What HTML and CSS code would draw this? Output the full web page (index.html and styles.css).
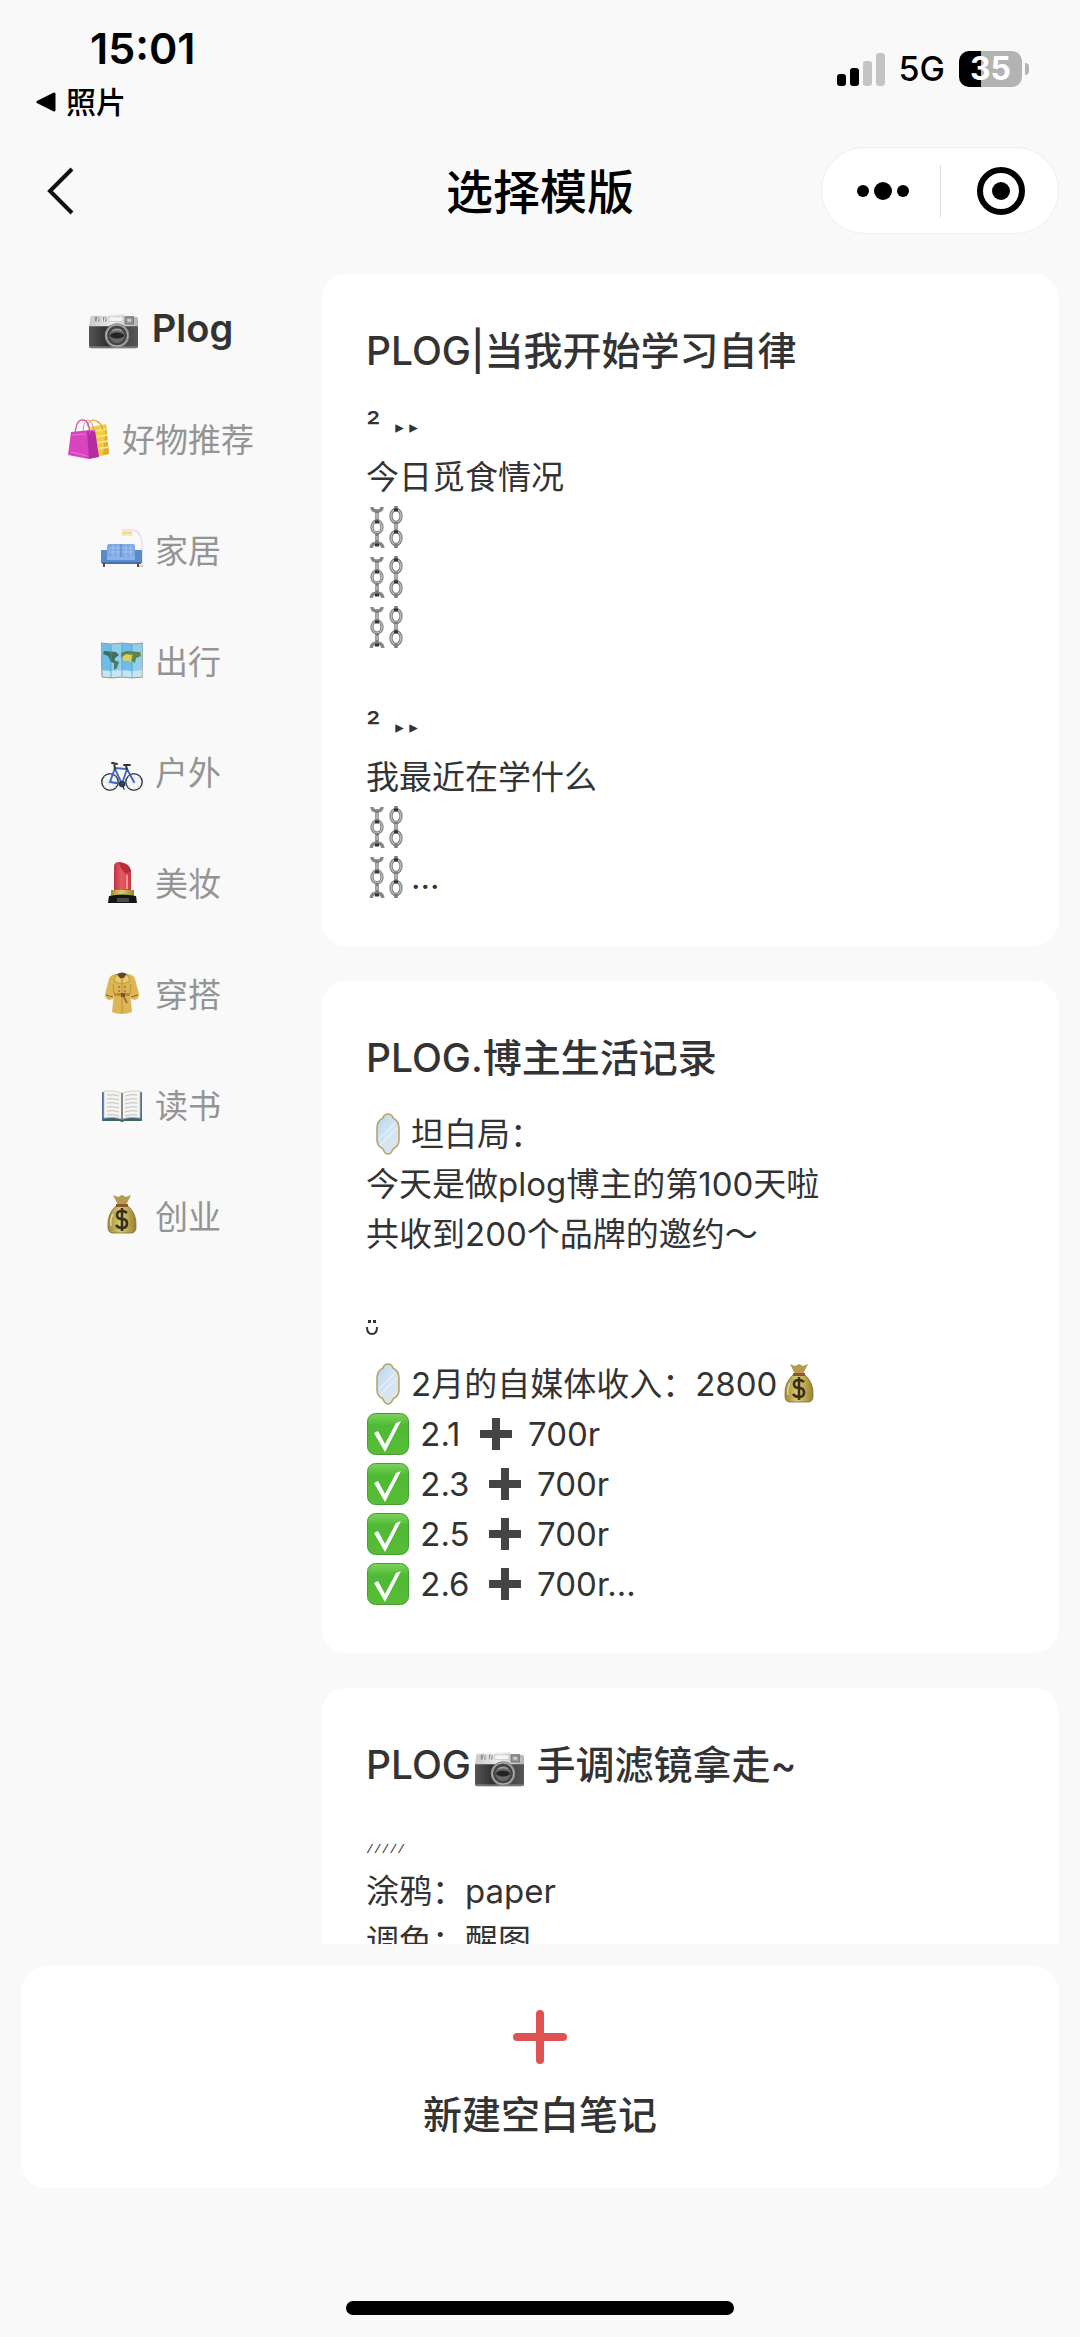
FILE: index.html
```html
<!DOCTYPE html>
<html lang="zh-CN">
<head>
  <meta charset="UTF-8">
  <meta name="viewport" content="width=device-width, initial-scale=1">
  <title>选择模版</title>
  <link rel="stylesheet" href="styles.css">
</head>
<body>

  <!-- emoji sprite -->
  <svg class="sprite" aria-hidden="true">
    <defs>
      <linearGradient id="silver" x1="0" y1="0" x2="1" y2="0">
        <stop offset="0" stop-color="#c9c9c7"/><stop offset=".5" stop-color="#efefed"/><stop offset="1" stop-color="#b4b4b2"/>
      </linearGradient>
      <linearGradient id="leather" x1="0" y1="0" x2="1" y2="0">
        <stop offset="0" stop-color="#555"/><stop offset=".4" stop-color="#2c2c2c"/><stop offset="1" stop-color="#585858"/>
      </linearGradient>
      <linearGradient id="green" x1="0" y1="0" x2="0" y2="1">
        <stop offset="0" stop-color="#7bd45c"/><stop offset=".3" stop-color="#4fb935"/><stop offset="1" stop-color="#58bd35"/>
      </linearGradient>
      <linearGradient id="gold" x1="0" y1="0" x2="1" y2="0">
        <stop offset="0" stop-color="#a08a35"/><stop offset=".45" stop-color="#dccb72"/><stop offset="1" stop-color="#96802f"/>
      </linearGradient>
      <linearGradient id="lip" x1="0" y1="0" x2="1" y2="0">
        <stop offset="0" stop-color="#c23345"/><stop offset=".45" stop-color="#e65a63"/><stop offset="1" stop-color="#c93646"/>
      </linearGradient>
      <linearGradient id="glass" x1="0" y1="0" x2="1" y2="1">
        <stop offset="0" stop-color="#b9d6ee"/><stop offset=".5" stop-color="#d3e4f4"/><stop offset="1" stop-color="#dfe5e8"/>
      </linearGradient>
    </defs>

    <symbol id="camera" viewBox="0 0 42 42">
      <path d="M1 12q0-2 2-2h14l1-1h12l1 2h9q2 0 2 2v7H0z" fill="url(#silver)"/>
      <path d="M5 11h4v4H5zM12 11h3v4h-3z" fill="#8d8d8b"/>
      <path d="M8 11l-1 4M14 11l-1 4" stroke="#eee"/>
      <path d="M17 11h12v4H17z" fill="#f4f4f2" stroke="#bbb" stroke-width=".5"/>
      <path d="M31 11h7v6h-7z" fill="#9a9a98" stroke="#777"/>
      <path d="M33 13h3v2h-3z" fill="#d8d8d6"/>
      <path d="M0 19h42v17q0 2-2 2H2q-2 0-2-2z" fill="url(#leather)"/>
      <path d="M0 37h42" stroke="#8a8a8a" stroke-width="1"/>
      <circle cx="24" cy="27" r="10.5" fill="#8c8c8c"/>
      <circle cx="24" cy="27" r="9" fill="#444" stroke="#c2c2c2" stroke-width=".8"/>
      <circle cx="24" cy="27" r="6.5" fill="#6a6a6a"/>
      <ellipse cx="24" cy="27" rx="6" ry="2.5" fill="#242424"/>
      <path d="M20 23q4-2 8 0" stroke="#a5a5a5" fill="none"/>
    </symbol>

    <symbol id="bags" viewBox="0 0 42 42">
      <path d="M22 10l16-3 3 30-12 3z" fill="#f2cb45"/>
      <path d="M38 7l3 30-6 1z" fill="#d9ab31"/>
      <path d="M27 14l11-2M28 20l11-2M28 26l12-2M29 32l11-2" stroke="#f9e07d" stroke-width="2"/>
      <path d="M19 9q4-8 9-5 5 1 7 9" fill="none" stroke="#e0a93c" stroke-width="1.3"/>
      <path d="M3 15l19-2 8 25-9 4L0 38z" fill="#d944c0"/>
      <path d="M19 14l8-1 4 27-10 2z" fill="#b42c9f"/>
      <path d="M7 18Q8 2 15 3q6 0 7 14" fill="none" stroke="#c75a9c" stroke-width="1.3"/>
      <path d="M15 14Q16 2 20 3q5 1 6 12" fill="none" stroke="#d690a6" stroke-width="1"/>
      <path d="M4 18l14-1M3 35l16 4" stroke="#ee72d6" stroke-width="1"/>
    </symbol>

    <symbol id="sofa" viewBox="0 0 42 42">
      <path d="M29 2q11-1 12 14v21" fill="none" stroke="#dfe1ee" stroke-width="1.5"/>
      <path d="M21 1h9l2 7H21z" fill="#fbe7bd"/>
      <path d="M21 5h10" stroke="#f2cf8c" stroke-width="1.5"/>
      <path d="M36 38h6" stroke="#d8cfcf" stroke-width="2"/>
      <rect x="6" y="16" width="28" height="15" rx="2" fill="#7ea9e2"/>
      <path d="M8 20h24M8 24h24M12 17v12M17 17v12M25 17v12M30 17v12" stroke="#a9c7f0" stroke-width=".8"/>
      <path d="M20 16v13" stroke="#567fbd"/>
      <path d="M0 22h6v7h28v-7h7v13H0z" fill="#5a8acb"/>
      <path d="M6 29h28v3H6z" fill="#8db2e6"/>
      <path d="M1 35h39" stroke="#4772ad" stroke-width="2"/>
      <path d="M3 35v4M37 35v4" stroke="#62483a" stroke-width="2"/>
    </symbol>

    <symbol id="map" viewBox="0 0 42 42">
      <path d="M0 4l10 1 11-1 10 1 11-1v34l-11 1-10-1-10 1-10-1z" fill="#6fbde6"/>
      <path d="M10 5l11-1v34l-11 1zM31 5l11-1v34l-11 1z" fill="#91cdec"/>
      <path d="M0 31l10 1 11-1 10 1 11-1v7l-11 1-10-1-10 1-10-1z" fill="#c3e5f4"/>
      <path d="M3 12l12 1 3 3-4 3-1 5-3-1-3-6-5-2z" fill="#3f6e5a"/>
      <path d="M13 21l5 2-2 6-3 2z" fill="#4d7b67"/>
      <path d="M20 14l6-2 13 1 1 4-5 2-1 5-3-2-5 1-6-4z" fill="#5f8442"/>
      <path d="M20 19l5-4 7 1-2 7-7-1z" fill="#dece5d"/>
      <path d="M10 5v34M21 4v34M31 5v34" stroke="#4e95bd" stroke-width=".7"/>
      <path d="M0 4l10 1 11-1 10 1 11-1v34l-11 1-10-1-10 1-10-1z" fill="none" stroke="#a39b78" stroke-width="1"/>
    </symbol>

    <symbol id="bike" viewBox="0 0 42 42">
      <g fill="none" stroke-linecap="round">
        <circle cx="9" cy="32" r="8.2" stroke="#3d4350" stroke-width="1.6"/>
        <circle cx="33" cy="32" r="8.2" stroke="#3d4350" stroke-width="1.6"/>
        <path d="M9 24v16M1 32h16M3 26l12 12M15 26L3 38M33 24v16M25 32h16M27 26l12 12M39 26L27 38" stroke="#c9ccd2" stroke-width=".5"/>
        <path d="M9 32l5-14 12 1-5 15zM14 19l7 15M9 32l12 2M26 19l7 13" stroke="#3f66b5" stroke-width="1.8"/>
        <path d="M14 19l-1-6M11 13l5 1" stroke="#30343d" stroke-width="2"/>
        <path d="M26 19l-1-3M23 15h6" stroke="#30343d" stroke-width="2"/>
        <circle cx="21" cy="34" r="2.2" stroke="#24355c" stroke-width="2"/>
        <path d="M21 34l2 5" stroke="#333" stroke-width="1.4"/>
      </g>
    </symbol>

    <symbol id="lipstick" viewBox="0 0 42 42">
      <path d="M13 30V6q0-5 5-5 9 1 12 8v21z" fill="url(#lip)"/>
      <path d="M18 1q11 1 12 9-3 3-6 2Q19 8 18 1z" fill="#b62d3d"/>
      <path d="M26 14v14" stroke="#f09193" stroke-width="2"/>
      <path d="M10 29h23v8H10z" fill="url(#gold)"/>
      <path d="M8 35q13-3 27 0l1 7H7z" fill="#151515"/>
      <path d="M16 37h12v4H16z" fill="#4a4a4a"/>
    </symbol>

    <symbol id="coat" viewBox="0 0 42 42">
      <path d="M15 2q-6 1-7 5L4 22q0 5 4 6l4-1 1-6-2 19q9 4 20 0l-2-19 1 6 4 1q4-1 4-6L34 7q-1-4-7-5z" fill="#dcb655"/>
      <path d="M12 12l1 10M30 12l-1 10" stroke="#b9923c" stroke-width="1"/>
      <path d="M16 2q5-3 10 0l-3 4h-4z" fill="#544a32"/>
      <path d="M15 2l-2 7 7 3 1-4zM26 2l3 7-7 3-1-4z" fill="#ecc96a" stroke="#b08a31" stroke-width=".7"/>
      <path d="M21 12v29" stroke="#b08a31" stroke-width=".8"/>
      <path d="M13 21h16v3H13z" fill="#b98a38"/>
      <path d="M20 21h4v4h-4z" fill="#7b5a22"/>
      <path d="M23 25l3 6" stroke="#a1742a" stroke-width="2"/>
      <path d="M5 23l7 2M37 23l-7 2" stroke="#8e6a26" stroke-width="1.3"/>
      <g fill="#9a7630"><circle cx="18" cy="15" r="1"/><circle cx="24" cy="15" r="1"/><circle cx="18" cy="19" r="1"/><circle cx="24" cy="19" r="1"/></g>
    </symbol>

    <symbol id="book" viewBox="0 0 42 42">
      <path d="M1 9l20 2 20-2v29H23l-2 1-2-1H1z" fill="#4f6f9f"/>
      <path d="M2 36q10-2 19 1 9-3 19-1v2H23l-2 1-2-1H2z" fill="#3d6662"/>
      <path d="M3 8q10-1 18 2v26q-8-3-18-1zM39 8q-10-1-18 2v26q8-3 18-1z" fill="#f5f4f1" stroke="#bdbdbd" stroke-width=".6"/>
      <path d="M6 12q7-1 12 1M6 16q7-1 12 1M6 20q7-1 12 1M6 24q7-1 12 1M6 28q7-1 12 1M6 32q7-1 12 1M24 13q5-2 12-1M24 17q5-2 12-1M24 21q5-2 12-1M24 25q5-2 12-1M24 29q5-2 12-1M24 33q5-2 12-1" fill="none" stroke="#b9b9b9" stroke-width=".9"/>
      <path d="M21 10v27" stroke="#777" stroke-width="1.6"/>
    </symbol>

    <symbol id="money" viewBox="0 0 42 42">
      <path d="M12 1l5 2 4-2 4 2 5-2-5 10h-8z" fill="#b39c50"/>
      <path d="M16 11h10q10 8 9 22 0 6-5 6H12q-5 0-5-6Q6 19 16 11z" fill="url(#gold)" stroke="#7d6b30" stroke-width=".8"/>
      <path d="M15 10h12v3H15z" fill="#8b5a2c"/>
      <path d="M26 19q-2-2-5-2-5 0-5 4t5 4 5 4.500-5 4.500q-4 0-6-3M21 14v23" fill="none" stroke="#38301a" stroke-width="2.600"/>
      <path d="M12 20q-3 5-2 12" fill="none" stroke="#e7da94" stroke-width="1.5"/>
    </symbol>

    <symbol id="chains" viewBox="0 0 42 42">
      <g fill="none" stroke="#858887" stroke-width="3.400">
        <path d="M5 1q0 4 5 4t5-4M4 42q1-5 6-5t6 5"/>
        <ellipse cx="10" cy="21" rx="5" ry="6"/>
        <ellipse cx="29" cy="10" rx="5" ry="6.500"/>
        <ellipse cx="29" cy="32" rx="5" ry="6.500"/>
      </g>
      <g fill="none" stroke="#dcdedd" stroke-width=".8">
        <ellipse cx="10" cy="21" rx="5" ry="6"/>
        <ellipse cx="29" cy="10" rx="5" ry="6.500"/>
        <ellipse cx="29" cy="32" rx="5" ry="6.500"/>
      </g>
      <path d="M10 5v11M10 27v10M29 0v5M29 16v10M29 38v4" stroke="#7b7d7d" stroke-width="3.500"/>
      <path d="M10 7v6M10 30v4M29 18v5" stroke="#e3e4e4" stroke-width="1"/>
      <path d="M8 16h4M8 39h4M27 4h4M27 26h4" stroke="#333" stroke-width="3"/>
    </symbol>

    <symbol id="mirror" viewBox="0 0 42 42">
      <path d="M21 1q4 0 5 4 6 3 6 10v12q0 6-6 9-2 5-5 5t-5-5q-6-3-6-9V15q0-7 6-10 1-4 5-4z" fill="url(#glass)" stroke="#b7a66c" stroke-width="1.600"/>
      <path d="M12 26L28 10M13 32l17-17" stroke="#e6f0f9" stroke-width="1.200"/>
    </symbol>

    <symbol id="check" viewBox="0 0 42 42">
      <rect x=".5" y=".5" width="41" height="41" rx="8" fill="url(#green)" stroke="#4b9a38"/>
      <path d="M7 20l4-2 7 13L29 10l5-2-16 31z" fill="#fff"/>
    </symbol>

    <symbol id="plus" viewBox="0 0 42 42">
      <path d="M17 5h8v12h12v8H25v12h-8V25H5v-8h12z" fill="#444"/>
    </symbol>
  </svg>

  <div class="app">
    <header class="top">
      <div class="status">
        <div class="status-left">
          <time class="clock">15:01</time>
          <a class="back-app" href="#">
            <svg width="20" height="20" viewBox="0 0 20 20" aria-hidden="true"><path d="M18 2v16L2 10z" stroke="#000" stroke-width="3" stroke-linejoin="round"/></svg>
            照片
          </a>
        </div>
        <div class="status-right">
          <svg width="48" height="33" viewBox="0 0 48 33" aria-hidden="true">
            <rect x="0" y="21" width="9" height="12" rx="3"/>
            <rect x="13" y="15" width="9" height="18" rx="3"/>
            <rect x="26" y="8" width="9" height="25" rx="3" fill="#c4c4c4"/>
            <rect x="39" y="0" width="9" height="33" rx="3" fill="#c4c4c4"/>
          </svg>
          <span class="network">5G</span>
          <span class="battery">35</span>
        </div>
      </div>

      <div class="nav">
        <button class="back" aria-label="返回">
          <svg width="28" height="48" viewBox="0 0 28 48" fill="none" stroke="#111" stroke-width="4"><path d="M26 2L4 24l22 22"/></svg>
        </button>
        <h1>选择模版</h1>
        <div class="capsule">
          <button aria-label="更多">
            <svg width="54" height="20" viewBox="0 0 54 20"><circle cx="7" cy="10" r="6"/><circle cx="27" cy="10" r="9"/><circle cx="47" cy="10" r="6"/></svg>
          </button>
          <button aria-label="关闭">
            <svg width="48" height="48" viewBox="0 0 48 48"><circle cx="24" cy="24" r="21" fill="none" stroke="#000" stroke-width="6"/><circle cx="24" cy="24" r="9"/></svg>
          </button>
        </div>
      </div>
    </header>

    <main class="content">
      <nav class="categories">
        <button class="active"><svg><use href="#camera"/></svg>Plog</button>
        <button><svg><use href="#bags"/></svg>好物推荐</button>
        <button><svg><use href="#sofa"/></svg>家居</button>
        <button><svg><use href="#map"/></svg>出行</button>
        <button><svg><use href="#bike"/></svg>户外</button>
        <button><svg><use href="#lipstick"/></svg>美妆</button>
        <button><svg><use href="#coat"/></svg>穿搭</button>
        <button><svg><use href="#book"/></svg>读书</button>
        <button><svg><use href="#money"/></svg>创业</button>
      </nav>

      <div class="templates">
        <article class="card">
          <h2>PLOG|当我开始学习自律</h2>
          <p>
            ² <span class="arrows">&nbsp;▸ ▸</span><br>
            今日觅食情况<br>
            <svg class="emoji"><use href="#chains"/></svg><br>
            <svg class="emoji"><use href="#chains"/></svg><br>
            <svg class="emoji"><use href="#chains"/></svg><br>
            <br>
            ² <span class="arrows">&nbsp;▸ ▸</span><br>
            我最近在学什么<br>
            <svg class="emoji"><use href="#chains"/></svg><br>
            <svg class="emoji"><use href="#chains"/></svg>…
          </p>
        </article>

        <article class="card">
          <h2>PLOG.博主生活记录</h2>
          <p>
            <svg class="emoji"><use href="#mirror"/></svg>坦白局：<br>
            今天是做plog博主的第100天啦<br>
            共收到200个品牌的邀约～<br>
            <br>
            <svg class="smiley" viewBox="0 0 12 16" aria-hidden="true"><path d="M2 0h3v3H2zM7 0h3v3H7z"/><path d="M1 7q0 7 5 7t5-7" fill="none" stroke="#333" stroke-width="2"/></svg><br>
            <svg class="emoji"><use href="#mirror"/></svg>2月的自媒体收入：2800<svg class="emoji"><use href="#money"/></svg><br>
            <svg class="emoji"><use href="#check"/></svg> 2.1 <svg class="emoji plus"><use href="#plus"/></svg> 700r<br>
            <svg class="emoji"><use href="#check"/></svg> 2.3 <svg class="emoji plus"><use href="#plus"/></svg> 700r<br>
            <svg class="emoji"><use href="#check"/></svg> 2.5 <svg class="emoji plus"><use href="#plus"/></svg> 700r<br>
            <svg class="emoji"><use href="#check"/></svg> 2.6 <svg class="emoji plus"><use href="#plus"/></svg> 700r…
          </p>
        </article>

        <article class="card">
          <h2>PLOG<svg class="emoji"><use href="#camera"/></svg> 手调滤镜拿走~</h2>
          <p>
            <span class="slashes">/////</span><br>
            涂鸦：paper<br>
            调色：醒图
          </p>
        </article>
      </div>
    </main>

    <button class="new-note">
      <svg width="54" height="54" viewBox="0 0 54 54" fill="none" stroke="#e05252" stroke-width="8" stroke-linecap="round" aria-hidden="true"><path d="M27 4v46M4 27h46"/></svg>
      新建空白笔记
    </button>

    <div class="home-bar"></div>
  </div>

</body>
</html>
```
FILE: styles.css
```css
* {
  box-sizing: border-box;
}

body {
  margin: 0;
  background: #f9f9f9;
  color: #333;
  font-family: Inter, "Noto Sans CJK SC", sans-serif;
}

button {
  padding: 0;
  border: none;
  background: none;
  color: inherit;
  font: inherit;
  cursor: pointer;
}

.sprite {
  position: absolute;
  width: 0;
  height: 0;
}

.app {
  display: flex;
  flex-direction: column;
  height: 100vh;
}

/* status bar */
.status {
  display: flex;
  justify-content: space-between;
  align-items: flex-start;
  padding: 24px 50px 0 36px;
  color: #000;
}

.status-left {
  display: flex;
  flex-direction: column;
}

.clock {
  padding-left: 54px;
  font-size: 43px;
  font-weight: 600;
  line-height: 48px;
}

.back-app {
  display: flex;
  align-items: center;
  gap: 10px;
  padding-top: 10px;
  color: #000;
  font-size: 30px;
  font-weight: 500;
  line-height: 40px;
  text-decoration: none;
}

.status-right {
  display: flex;
  align-items: center;
  gap: 14px;
  padding-top: 25px;
}

.network {
  font-size: 34px;
  font-weight: 500;
  line-height: 40px;
}

.battery {
  position: relative;
  width: 63px;
  height: 36px;
  margin-right: 8px;
  border-radius: 10px;
  background: linear-gradient(to right, #000 35%, #b3b3b3 35%);
  color: #fff;
  font-size: 32px;
  font-weight: 700;
  line-height: 36px;
  text-align: center;
}

.battery::after {
  content: "";
  position: absolute;
  top: 12px;
  right: -7px;
  width: 4px;
  height: 12px;
  border-radius: 0 4px 4px 0;
  background: #b3b3b3;
}

/* title bar */
.nav {
  display: grid;
  grid-template-columns: 1fr auto 1fr;
  align-items: center;
  padding: 25px 21px 40px;
}

.back {
  display: flex;
  justify-self: start;
  padding-left: 25px;
}

.nav h1 {
  margin: 0;
  padding-top: 2px;
  color: #000;
  font-size: 47px;
  font-weight: 500;
  line-height: 60px;
}

.capsule {
  display: flex;
  justify-self: end;
  align-items: center;
  width: 238px;
  height: 87px;
  border: 1px solid #eee;
  border-radius: 44px;
  background: #fff;
}

.capsule button {
  display: flex;
  flex: 1;
  align-items: center;
  justify-content: center;
  height: 52px;
  padding-left: 4px;
}

.capsule button + button {
  border-left: 1px solid #ddd;
}

/* categories + templates */
.content {
  display: flex;
  flex: 1;
  min-height: 0;
  padding-right: 22px;
  overflow: hidden;
}

.categories {
  display: flex;
  flex-direction: column;
  width: 322px;
}

.categories button {
  display: flex;
  align-items: center;
  justify-content: center;
  gap: 12px;
  height: 111px;
  color: #949494;
  font-size: 33px;
}

.categories svg {
  width: 42px;
  height: 42px;
}

.categories .active {
  gap: 14px;
  height: 108px;
  color: #333;
  font-size: 38px;
  font-weight: 600;
}

.categories .active svg {
  width: 49px;
  height: 49px;
}

.templates {
  display: flex;
  flex: 1;
  flex-direction: column;
  gap: 35px;
}

.card {
  flex-shrink: 0;
  padding: 44px;
  border-radius: 24px;
  background: #fff;
}

.card h2 {
  margin: 0 0 18px;
  font-size: 39px;
  font-weight: 500;
  line-height: 66px;
}

.card p {
  margin: 0;
  font-size: 33px;
  line-height: 50px;
}

.emoji {
  width: 42px;
  height: 42px;
  margin: 0 2px 0 1px;
  vertical-align: -9px;
}

.plus {
  margin-left: 5px;
}

h2 .emoji {
  width: 49px;
  height: 49px;
  margin-left: 4px;
  vertical-align: -12px;
}

.arrows {
  font-family: "DejaVu Sans", sans-serif;
  font-size: 17px;
  line-height: 1;
  vertical-align: 6px;
}

.smiley {
  width: 12px;
  height: 16px;
  fill: #333;
  vertical-align: 10px;
}

.slashes {
  font-family: "Liberation Mono", monospace;
  font-size: 13px;
  line-height: 1;
}

/* bottom */
.new-note {
  display: flex;
  flex-direction: column;
  align-items: center;
  gap: 18px;
  margin: 22px 22px 0;
  padding: 44px 0 40px;
  border-radius: 24px;
  background: #fff;
  font-size: 39px;
  font-weight: 500;
  line-height: 66px;
}

.home-bar {
  align-self: center;
  width: 36%;
  height: 14px;
  margin: 113px 0 22px;
  border-radius: 7px;
  background: #000;
}
```
